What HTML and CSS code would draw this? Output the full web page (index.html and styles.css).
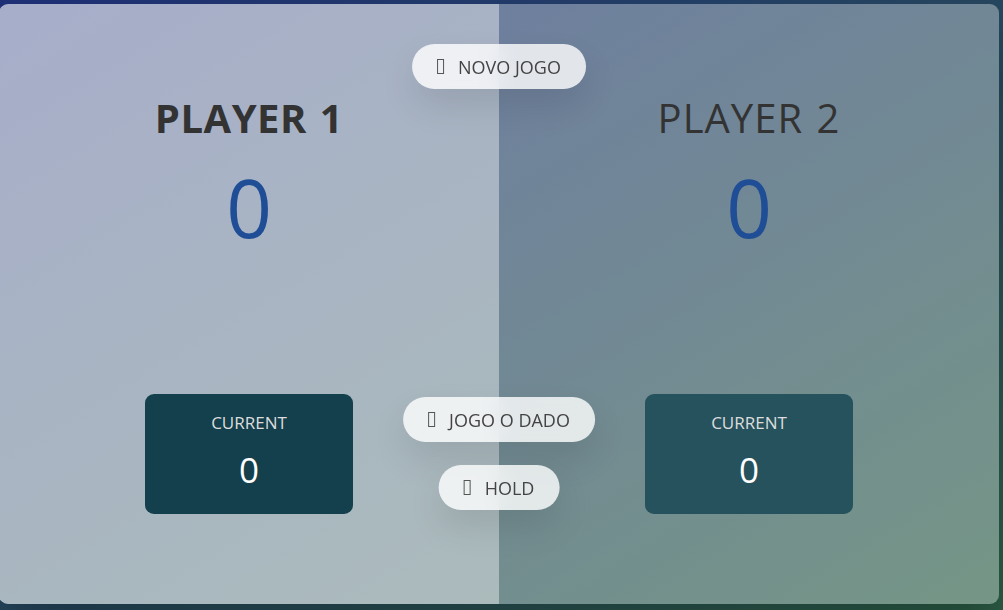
FILE: index.html
```html
<!DOCTYPE html>
<html lang="pt">
<head>
<meta charset="UTF-8">
<title>Pig Game</title>
<link rel="stylesheet" href="styles.css">
</head>
<body>
<main class="board">
  <section class="player player--active">
    <h2 class="name">Player 1</h2>
    <p class="score">0</p>
    <div class="current current--one">
      <p class="current-label">Current</p>
      <p class="current-score">0</p>
    </div>
  </section>
  <section class="player">
    <h2 class="name name--light">Player 2</h2>
    <p class="score">0</p>
    <div class="current current--two">
      <p class="current-label">Current</p>
      <p class="current-score">0</p>
    </div>
  </section>
  <button class="btn btn--new"><span class="tofu"></span>Novo jogo</button>
  <button class="btn btn--roll"><span class="tofu"></span>Jogo o dado</button>
  <button class="btn btn--hold"><span class="tofu"></span>Hold</button>
</main>
</body>
</html>
```
FILE: styles.css
```css
* {
  margin: 0;
  padding: 0;
  box-sizing: border-box;
}

html, body {
  height: 100%;
}

body {
  font-family: "Open Sans", "Noto Sans", sans-serif;
  color: #333;
  background-image: linear-gradient(to bottom right, #1f3078 0%, #2c5e46 100%);
  overflow: hidden;
  padding-top: 4px;
}

.board {
  position: relative;
  width: 1000px;
  height: 600px;
  margin-left: -1px;
  background-color: rgba(255, 255, 255, 0.35);
  box-shadow: 0 30px 50px rgba(0, 0, 0, 0.25);
  border-radius: 9px;
  overflow: hidden;
  display: flex;
}

.player {
  flex: 1;
  padding: 90px;
  display: flex;
  flex-direction: column;
  align-items: center;
}

.player--active {
  background-color: rgba(255, 255, 255, 0.4);
}

.name {
  font-size: 40px;
  line-height: 48px;
  text-transform: uppercase;
  letter-spacing: 0.5px;
  word-spacing: 2px;
  font-weight: 700;
  color: #333;
  margin-bottom: 10px;
}

.name--light {
  font-weight: 400;
  letter-spacing: 1px;
}

.score {
  font-size: 80px;
  font-weight: 400;
  color: #1f4e96;
  margin-bottom: auto;
}

.current {
  border-radius: 9px;
  color: #fff;
  width: 65%;
  padding: 20px;
  text-align: center;
}

.current--one {
  background-color: #143f4c;
}

.current--two {
  background-color: #26525d;
}

.current-label {
  text-transform: uppercase;
  margin-bottom: 13px;
  font-size: 17px;
  line-height: 18px;
  color: #ddd;
}

.current-score {
  font-size: 35px;
  line-height: 49px;
}

.btn {
  position: absolute;
  left: 50%;
  transform: translateX(-50%);
  color: #444;
  border: none;
  font-family: inherit;
  font-size: 18px;
  line-height: 31px;
  text-transform: uppercase;
  font-weight: 400;
  background-color: rgba(255, 255, 255, 0.8);
  backdrop-filter: blur(10px);
  padding: 8px 25px 6px;
  border-radius: 500px;
  box-shadow: 0 17px 35px rgba(0, 0, 0, 0.1);
  white-space: nowrap;
}

.tofu {
  display: inline-block;
  width: 7px;
  height: 15px;
  border: 1px solid #555;
  margin-right: 14px;
  vertical-align: baseline;
}

.btn--new {
  top: 40px;
}

.btn--roll {
  top: 393px;
}

.btn--hold {
  top: 461px;
}
```
